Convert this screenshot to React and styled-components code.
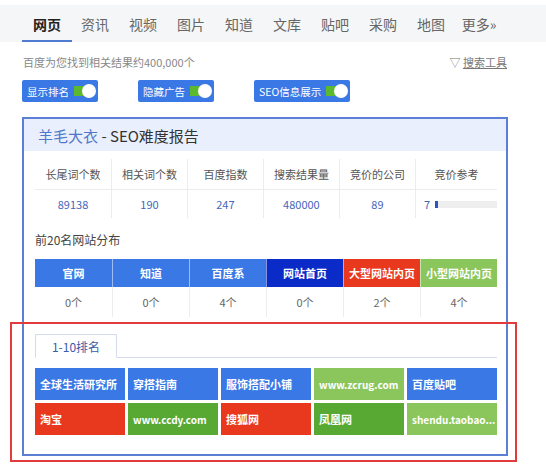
import React from "react";
import styled, { createGlobalStyle } from "styled-components";

const GlobalStyle = createGlobalStyle`
  body {
    margin: 0;
    background: #ffffff;
    font-family: "Noto Sans CJK SC", "Noto Sans", "Liberation Sans", sans-serif;
  }
`;

const Page = styled.div`
  position: relative;
  width: 546px;
  height: 476px;
  overflow: hidden;
  background: #fff;
`;

const Nav = styled.div`
  margin-top: 5px;
  height: 37px;
  background: #f5f6f7;
  display: flex;
  padding-left: 23px;
`;

const Tab = styled.div`
  position: relative;
  width: 48px;
  display: flex;
  align-items: center;
  justify-content: center;
  font-size: 14px;
  color: ${({ active }) => (active ? "#222" : "#666")};
  font-weight: ${({ active }) => (active ? 700 : 400)};
  &::after {
    content: "";
    display: ${({ active }) => (active ? "block" : "none")};
    position: absolute;
    left: -1px;
    right: -1px;
    bottom: 0;
    height: 2px;
    background: #4e7bd0;
  }
`;

const ResultBar = styled.div`
  margin-top: 13px;
  padding: 0 39px 0 23px;
  display: flex;
  justify-content: space-between;
  font-size: 11px;
  line-height: 14px;
  color: #888;
`;

const Tools = styled.span`
  color: #777;
  u {
    text-decoration: underline;
  }
`;

const ToggleRow = styled.div`
  margin-top: 11px;
  padding-left: 22px;
  display: flex;
  gap: 40px;
`;

const ToggleButton = styled.div`
  height: 22px;
  padding: 0 4px 0 5px;
  background: #3a78e6;
  border-radius: 2px;
  display: flex;
  align-items: center;
  gap: 5px;
  color: #fff;
  font-size: 10.5px;
`;

const Switch = styled.span`
  position: relative;
  width: 20px;
  height: 10px;
  background: #5cb82e;
  &::after {
    content: "";
    position: absolute;
    right: -2px;
    top: -2px;
    width: 14px;
    height: 14px;
    border-radius: 50%;
    background: #fff;
  }
`;

const Panel = styled.div`
  margin: 15px 38px 0 22px;
  border: 2px solid #5a7fd4;
  padding-bottom: 19px;
`;

const PanelHeader = styled.div`
  height: 32px;
  background: #e9effc;
  display: flex;
  align-items: center;
  padding-left: 14px;
  font-size: 15px;
  color: #333;
`;

const Keyword = styled.span`
  color: #4f77cc;
`;

const PanelBody = styled.div`
  padding: 0 9px 0 11px;
`;

const StatTable = styled.div`
  margin-top: 8px;
  display: grid;
  grid-template-columns: repeat(6, 1fr);
`;

const StatCell = styled.div`
  height: ${({ head }) => (head ? "30px" : "28px")};
  display: flex;
  align-items: center;
  justify-content: ${({ left }) => (left ? "flex-start" : "center")};
  padding-left: ${({ left }) => (left ? "8px" : "0")};
  font-size: 11px;
  color: ${({ head }) => (head ? "#555" : "#4466bb")};
  border-left: ${({ first }) => (first ? "none" : "1px solid #ececec")};
  border-top: ${({ head }) => (head ? "none" : "1px solid #ececec")};
`;

const Bar = styled.span`
  margin-left: 5px;
  width: 62px;
  height: 7px;
  background: #eeeeee;
  display: flex;
`;

const BarFill = styled.span`
  width: 3px;
  height: 100%;
  background: #2b55c6;
`;

const SectionTitle = styled.div`
  margin-top: 14px;
  font-size: 12px;
  line-height: 16px;
  color: #444;
`;

const DistTable = styled.div`
  margin-top: 11px;
  display: grid;
  grid-template-columns: repeat(6, 1fr);
`;

const DistHead = styled.div`
  height: 28px;
  background: ${({ color }) => color};
  border-left: ${({ first }) => (first ? "none" : "1px solid rgba(255,255,255,0.5)")};
  display: flex;
  align-items: center;
  justify-content: center;
  color: #fff;
  font-size: 11px;
  font-weight: 700;
`;

const DistCount = styled.div`
  height: 30px;
  border-left: ${({ first }) => (first ? "none" : "1px solid #ececec")};
  display: flex;
  align-items: center;
  justify-content: center;
  color: #666;
  font-size: 11px;
`;

const RankTabs = styled.div`
  margin-top: 17px;
  display: flex;
  border-bottom: 1px solid #d3dbec;
`;

const RankTab = styled.div`
  width: 80px;
  height: 22px;
  margin-bottom: -1px;
  border: 1px solid #d3dbec;
  border-bottom-color: #fff;
  background: #fff;
  display: flex;
  align-items: center;
  justify-content: center;
  font-size: 12px;
  color: #3a5aa8;
`;

const RankGrid = styled.div`
  margin-top: 10px;
  display: grid;
  grid-template-columns: repeat(5, 1fr);
  gap: 3px;
`;

const RankCell = styled.div`
  height: 32px;
  min-width: 0;
  background: ${({ color }) => color};
  display: flex;
  align-items: center;
  padding: 0 5px;
  color: #fff;
  font-size: ${({ latin }) => (latin ? "10px" : "11px")};
  font-weight: 700;
  white-space: nowrap;
`;

const Highlight = styled.div`
  position: absolute;
  left: 10px;
  top: 322px;
  width: 503px;
  height: 136px;
  border: 2px solid #e23b3b;
  pointer-events: none;
`;

const BLUE = "#3a78e6";
const DARK = "#0a2bc8";
const RED = "#e8391e";
const GREEN = "#58a834";
const LIGHT = "#8bc65c";

const tabs = ["网页", "资讯", "视频", "图片", "知道", "文库", "贴吧", "采购", "地图", "更多»"];
const toggles = ["显示排名", "隐藏广告", "SEO信息展示"];
const stats = [
  ["长尾词个数", "89138"],
  ["相关词个数", "190"],
  ["百度指数", "247"],
  ["搜索结果量", "480000"],
  ["竞价的公司", "89"],
  ["竞价参考", "7"],
];
const dist = [
  ["官网", BLUE, "0个"],
  ["知道", BLUE, "0个"],
  ["百度系", BLUE, "4个"],
  ["网站首页", DARK, "0个"],
  ["大型网站内页", RED, "2个"],
  ["小型网站内页", LIGHT, "4个"],
];
const ranks = [
  ["全球生活研究所", BLUE],
  ["穿搭指南", BLUE],
  ["服饰搭配小铺", BLUE],
  ["www.zcrug.com", LIGHT, true],
  ["百度贴吧", BLUE],
  ["淘宝", RED],
  ["www.ccdy.com", GREEN, true],
  ["搜狐网", RED],
  ["凤凰网", GREEN],
  ["shendu.taobao...", LIGHT, true],
];

const App = () => {
  return (
    <Page>
      <GlobalStyle />
      <Nav>
        {tabs.map((t, i) => (
          <Tab key={t} active={i === 0}>
            {t}
          </Tab>
        ))}
      </Nav>
      <ResultBar>
        <span>百度为您找到相关结果约400,000个</span>
        <Tools>
          ▽ <u>搜索工具</u>
        </Tools>
      </ResultBar>
      <ToggleRow>
        {toggles.map((t) => (
          <ToggleButton key={t}>
            {t}
            <Switch />
          </ToggleButton>
        ))}
      </ToggleRow>
      <Panel>
        <PanelHeader>
          <Keyword>羊毛大衣</Keyword>&nbsp;- SEO难度报告
        </PanelHeader>
        <PanelBody>
          <StatTable>
            {stats.map(([h], i) => (
              <StatCell key={h} head first={i === 0}>
                {h}
              </StatCell>
            ))}
            {stats.map(([h, v], i) =>
              i === 5 ? (
                <StatCell key={h + v} first={false} left>
                  {v}
                  <Bar>
                    <BarFill />
                  </Bar>
                </StatCell>
              ) : (
                <StatCell key={h + v} first={i === 0}>
                  {v}
                </StatCell>
              )
            )}
          </StatTable>
          <SectionTitle>前20名网站分布</SectionTitle>
          <DistTable>
            {dist.map(([name, color], i) => (
              <DistHead key={name} color={color} first={i === 0}>
                {name}
              </DistHead>
            ))}
            {dist.map(([name, , count], i) => (
              <DistCount key={name + "c"} first={i === 0}>
                {count}
              </DistCount>
            ))}
          </DistTable>
          <RankTabs>
            <RankTab>1-10排名</RankTab>
          </RankTabs>
          <RankGrid>
            {ranks.map(([name, color, latin]) => (
              <RankCell key={name} color={color} latin={latin}>
                {name}
              </RankCell>
            ))}
          </RankGrid>
        </PanelBody>
      </Panel>
      <Highlight />
    </Page>
  );
};

export default App;
